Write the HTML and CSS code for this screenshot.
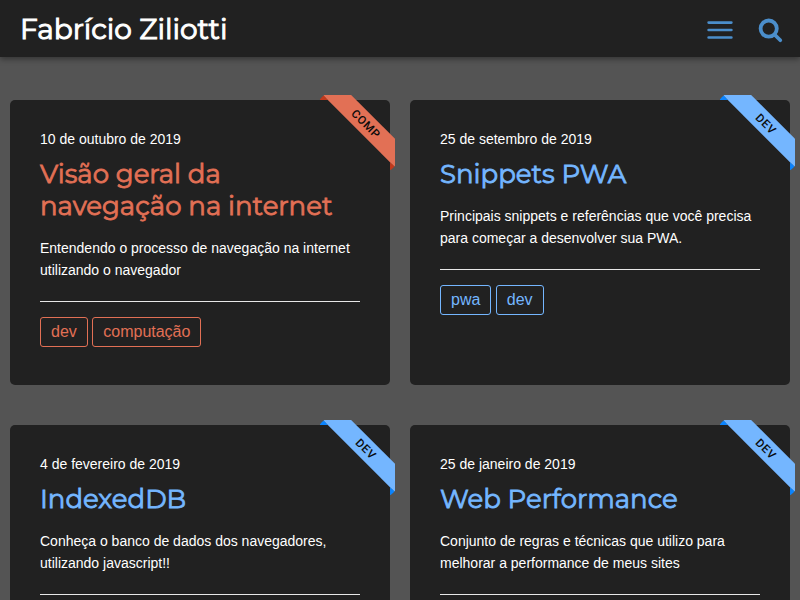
FILE: index.html
```
<!DOCTYPE html>
<html lang="pt-BR">
<head>
<meta charset="utf-8">
<title>Fabrício Ziliotti</title>
<link rel="stylesheet" href="styles.css">
</head>
<body>
<header class="header">
  <a class="brand">Fabrício Ziliotti</a>
  <nav class="actions">
    <svg class="icon" width="26" height="26" viewBox="0 0 26 26"><path d="M1.6 5.6H24.4M1.6 13H24.4M1.6 20.5H24.4" stroke-width="2.6"/></svg>
    <svg class="icon" width="26" height="26" viewBox="0 0 26 26"><circle cx="11.7" cy="11.6" r="8.1" stroke-width="3.8"/><path d="M18 18L23.3 23.3" stroke-width="3.7"/></svg>
  </nav>
</header>
<main class="posts">
  <article class="card comp">
    <div class="ribbon"><span>Comp</span></div>
    <time class="date">10 de outubro de 2019</time>
    <h2 class="title">Visão geral da navegação na internet</h2>
    <p class="text">Entendendo o processo de navegação na internet utilizando o navegador</p>
    <div class="tags"><a class="tag">dev</a> <a class="tag">computação</a></div>
  </article>
  <article class="card">
    <div class="ribbon"><span>Dev</span></div>
    <time class="date">25 de setembro de 2019</time>
    <h2 class="title">Snippets PWA</h2>
    <p class="text">Principais snippets e referências que você precisa para começar a desenvolver sua PWA.</p>
    <div class="tags"><a class="tag">pwa</a> <a class="tag">dev</a></div>
  </article>
  <article class="card">
    <div class="ribbon"><span>Dev</span></div>
    <time class="date">4 de fevereiro de 2019</time>
    <h2 class="title">IndexedDB</h2>
    <p class="text">Conheça o banco de dados dos navegadores, utilizando javascript!!</p>
    <div class="tags"></div>
  </article>
  <article class="card">
    <div class="ribbon"><span>Dev</span></div>
    <time class="date">25 de janeiro de 2019</time>
    <h2 class="title">Web Performance</h2>
    <p class="text">Conjunto de regras e técnicas que utilizo para melhorar a performance de meus sites</p>
    <div class="tags"></div>
  </article>
</main>
</body>
</html>
```
FILE: styles.css
```
* { box-sizing: border-box; }
html { height: 100%; overflow: hidden; }
body {
  margin: 0;
  height: 100%;
  overflow: hidden;
  background: #545454;
  color: #fff;
  font-family: "Liberation Sans", Arial, sans-serif;
}
.header {
  position: relative;
  display: flex;
  align-items: center;
  justify-content: space-between;
  height: 57px;
  padding: 0 17px 0 20px;
  background: #212121;
  box-shadow: 0 2px 6px rgba(0, 0, 0, .4);
}
.brand, .title {
  font-family: Montserrat, Inter, sans-serif;
  font-size: 28px;
  font-weight: 400;
  line-height: 32px;
  -webkit-text-stroke: 1px currentColor;
}
.actions { display: flex; gap: 24px; padding-top: 3px; }
.icon { fill: none; stroke: #4b8ecb; stroke-linecap: round; }
.posts {
  display: grid;
  grid-template-columns: 1fr 1fr;
  grid-auto-rows: 285px;
  gap: 40px 20px;
  padding: 43px 10px;
}
.card {
  --main: #74b6ff;
  --fold: #0a84ff;
  position: relative;
  padding: 30px;
  background: #212121;
  border-radius: 5px;
}
.card.comp { --main: #e27055; --fold: #c2391c; }
.date { display: block; font-size: 14px; line-height: 18px; }
.title {
  margin: 10px 0 15px;
  color: var(--main);
  font-size: 26px;
  -webkit-text-stroke-width: .8px;
}
.text { margin: 0; font-size: 14px; line-height: 22px; }
.tags { margin-top: 20px; padding-top: 15px; border-top: 1px solid #e8e8e8; }
.tag {
  display: inline-block;
  height: 30px;
  padding: 0 10px;
  border: 1px solid var(--main);
  border-radius: 3px;
  color: var(--main);
  font-size: 16px;
  line-height: 28px;
}
.ribbon {
  position: absolute;
  top: -5px;
  right: -5px;
  width: 75px;
  height: 75px;
  overflow: hidden;
}
.ribbon span {
  position: absolute;
  top: 19px;
  right: -21px;
  width: 100px;
  background: var(--main);
  color: #0a0a0a;
  font: 500 11.5px/20px Roboto, sans-serif;
  letter-spacing: .7px;
  text-align: center;
  text-transform: uppercase;
  transform: rotate(45deg);
}
.ribbon span::before, .ribbon span::after {
  content: "";
  position: absolute;
  top: 100%;
  border: 3px solid transparent;
  border-top-color: var(--fold);
}
.ribbon span::before { left: 0; border-left-color: var(--fold); }
.ribbon span::after { right: 0; border-right-color: var(--fold); }
```
